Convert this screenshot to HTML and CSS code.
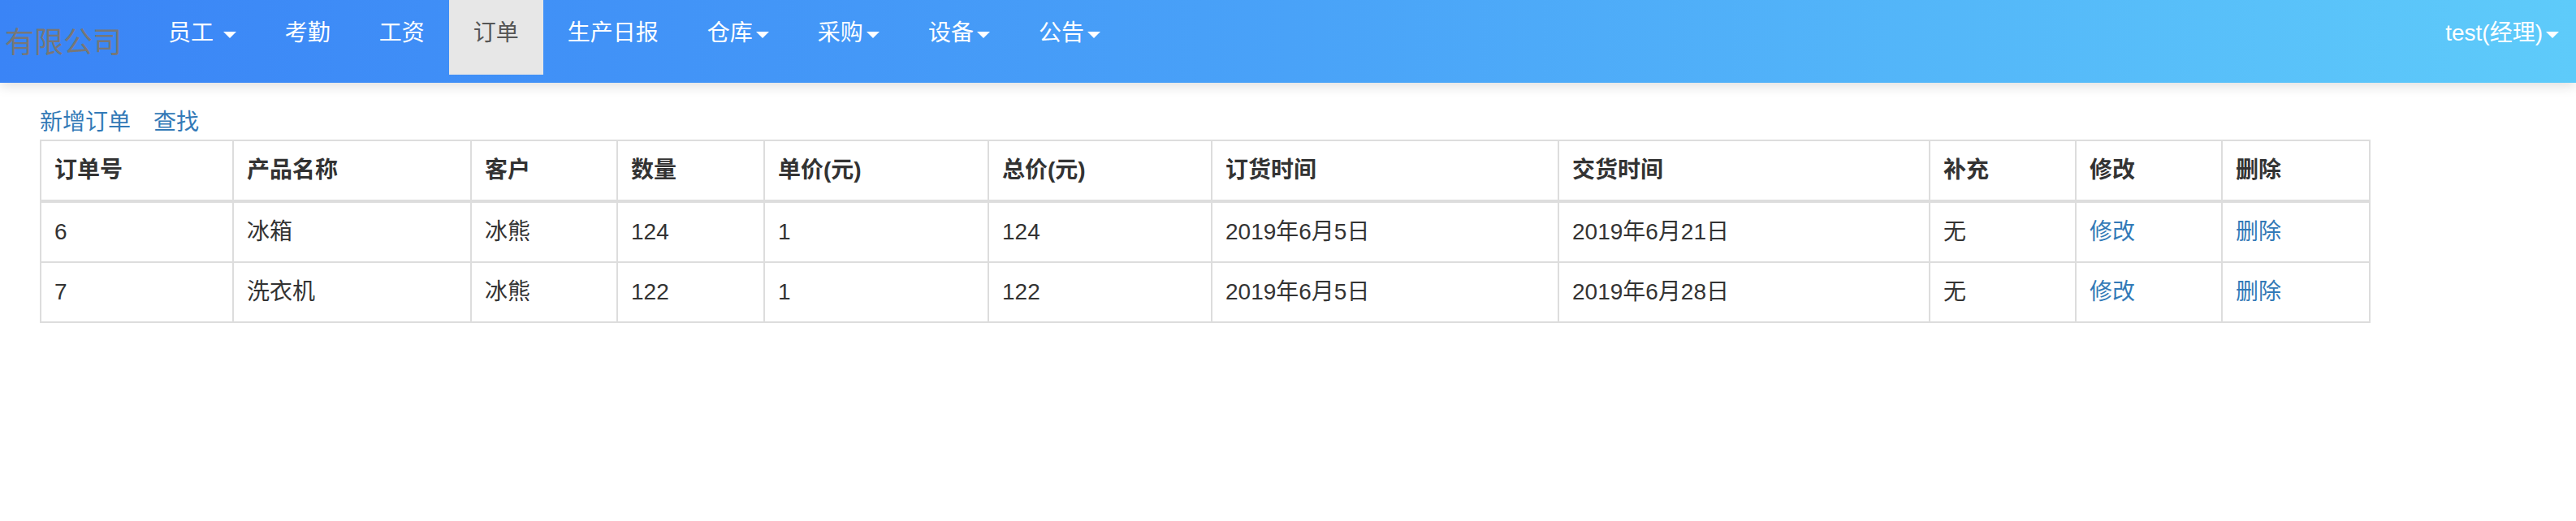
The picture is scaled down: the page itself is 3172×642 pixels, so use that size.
FILE: index.html
```html
<!DOCTYPE html>
<html lang="zh-CN">
<head>
<meta charset="utf-8">
<title>订单</title>
<link rel="stylesheet" href="styles.css">
</head>
<body>
<header class="navbar">
  <a class="brand" href="#">有限公司</a>
  <ul class="nav">
    <li><a href="#">员工 <span class="caret"></span></a></li>
    <li><a href="#">考勤</a></li>
    <li><a href="#">工资</a></li>
    <li class="active"><a href="#">订单</a></li>
    <li><a href="#">生产日报</a></li>
    <li><a href="#">仓库<span class="caret"></span></a></li>
    <li><a href="#">采购<span class="caret"></span></a></li>
    <li><a href="#">设备<span class="caret"></span></a></li>
    <li><a href="#">公告<span class="caret"></span></a></li>
  </ul>
  <ul class="nav nav-right">
    <li><a href="#">test(经理)<span class="caret"></span></a></li>
  </ul>
</header>
<main class="content">
  <div class="actions">
    <a href="#">新增订单</a>
    <a href="#">查找</a>
  </div>
  <table class="orders">
    <colgroup>
      <col class="w1"><col class="w2"><col class="w3"><col class="w4"><col class="w5"><col class="w6"><col class="w7"><col class="w8"><col class="w9"><col class="w10"><col class="w11">
    </colgroup>
    <thead>
      <tr>
        <th>订单号</th><th>产品名称</th><th>客户</th><th>数量</th><th>单价(元)</th><th>总价(元)</th><th>订货时间</th><th>交货时间</th><th>补充</th><th>修改</th><th>删除</th>
      </tr>
    </thead>
    <tbody>
      <tr>
        <td>6</td><td>冰箱</td><td>冰熊</td><td>124</td><td>1</td><td>124</td><td>2019年6月5日</td><td>2019年6月21日</td><td>无</td><td><a href="#">修改</a></td><td><a href="#">删除</a></td>
      </tr>
      <tr>
        <td>7</td><td>洗衣机</td><td>冰熊</td><td>122</td><td>1</td><td>122</td><td>2019年6月5日</td><td>2019年6月28日</td><td>无</td><td><a href="#">修改</a></td><td><a href="#">删除</a></td>
      </tr>
    </tbody>
  </table>
</main>
</body>
</html>
```
FILE: styles.css
```css
html, body {
  margin: 0;
  padding: 0;
  background: #fff;
}
body {
  font-family: "Liberation Sans", "Noto Sans CJK SC", sans-serif;
  font-size: 28px;
  line-height: 40px;
  color: #333;
}
a {
  text-decoration: none;
}

/* navbar */
.navbar {
  position: relative;
  z-index: 2;
  display: flex;
  align-items: flex-start;
  height: 102px;
  background: linear-gradient(90deg, #3a84f6 0%, #49a2f8 50%, #5ecbfa 100%);
  box-shadow: 0 4px 14px rgba(0, 0, 0, 0.13);
}
.brand {
  flex: none;
  display: flex;
  align-items: center;
  box-sizing: border-box;
  width: 177px;
  height: 102px;
  padding: 3px 0 0 6px;
  font-size: 36px;
  line-height: 40px;
  color: #777;
  white-space: nowrap;
}
.nav {
  display: flex;
  margin: 0;
  padding: 0;
  list-style: none;
}
.nav a {
  display: block;
  padding: 21px 30px 31px;
  line-height: 40px;
  color: #fff;
  white-space: nowrap;
}
.nav .active a {
  background: #e7e7e7;
  color: #555;
}
.nav-right {
  margin-left: auto;
}
.nav-right a {
  padding-right: 21px;
}
.caret {
  display: inline-block;
  width: 0;
  height: 0;
  margin-left: 4px;
  vertical-align: middle;
  border-top: 8px solid #fff;
  border-left: 8px solid transparent;
  border-right: 8px solid transparent;
}

/* content */
.content {
  padding: 29px 0 0 49px;
}
.actions {
  display: flex;
  gap: 28px;
  line-height: 40px;
}
.actions a,
.orders a {
  color: #337ab7;
}
.orders {
  margin-top: 1px;
  width: 2868px;
  table-layout: fixed;
  border-collapse: collapse;
}
.orders th,
.orders td {
  border: 2px solid #ddd;
  padding: 16px;
  line-height: 40px;
  text-align: left;
  vertical-align: top;
  white-space: nowrap;
}
.orders th {
  font-weight: bold;
  border-bottom-width: 4px;
}
.w1 { width: 237px; }
.w2 { width: 293px; }
.w3 { width: 180px; }
.w4 { width: 181px; }
.w5 { width: 276px; }
.w6 { width: 275px; }
.w7 { width: 427px; }
.w8 { width: 457px; }
.w9 { width: 180px; }
.w10 { width: 180px; }
.w11 { width: 182px; }
```
